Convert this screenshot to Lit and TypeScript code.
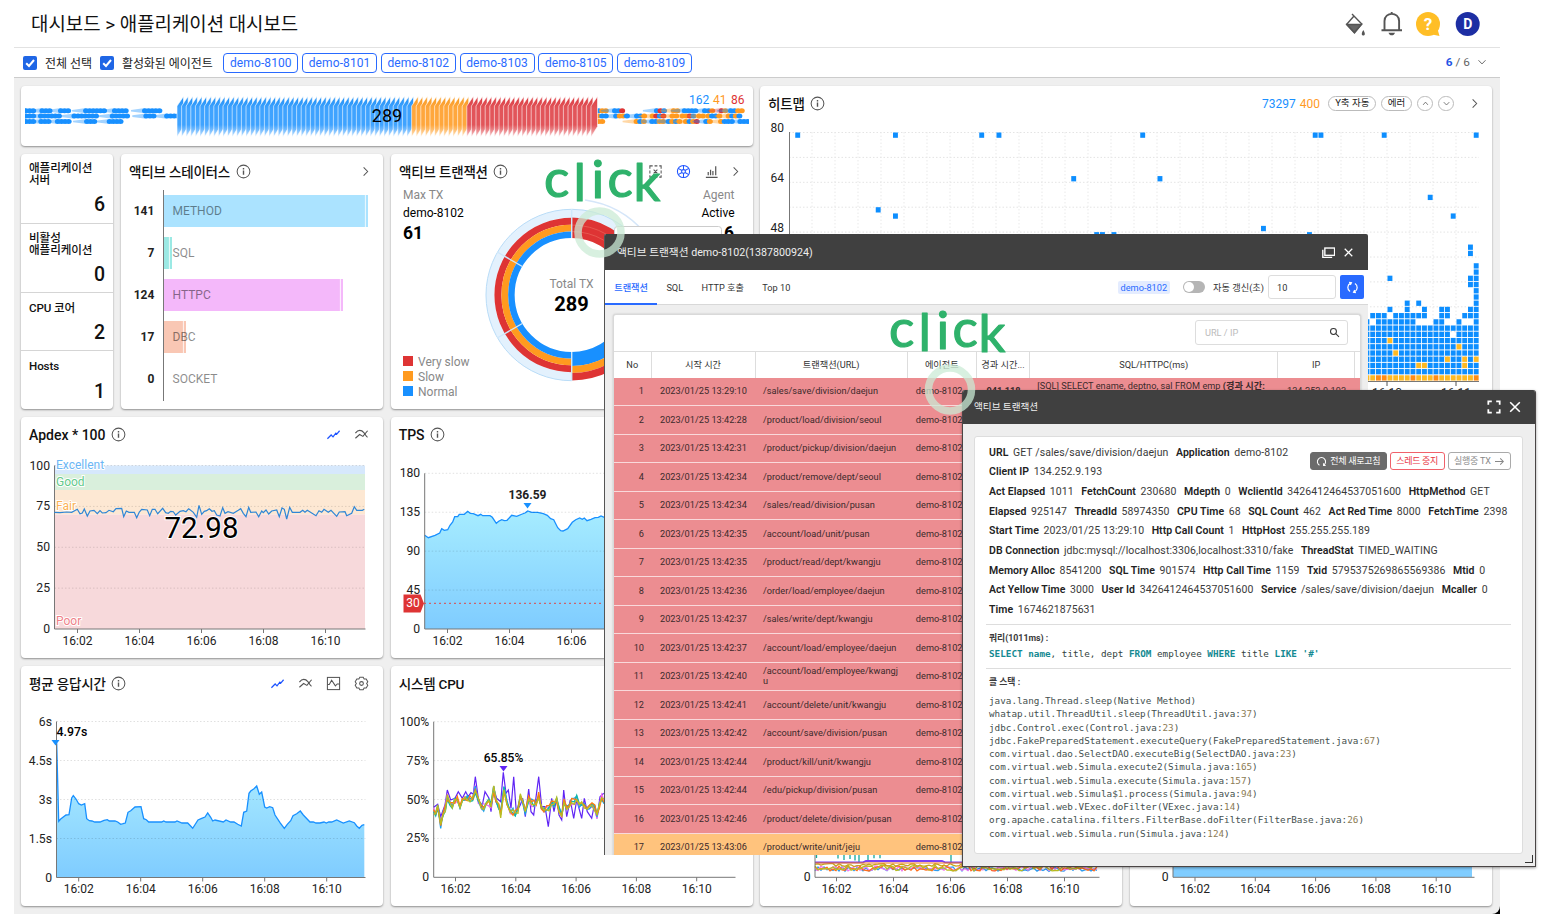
import { LitElement, html, svg, css, nothing } from "lit";
import { customElement, property } from "lit/decorators.js";

const BLUE = "#1890ff";
const ORANGE = "#ff9a1f";
const RED = "#de3434";

/** Parses "x,y x,y" samples stored in thirds of a pixel and moves them to an origin. */
const parse = (s: string, ox: number, oy: number): [number, number][] =>
  s.trim().split(/\s+/).map((p) => {
    const [x, y] = p.split(",").map(Number);
    return [x / 3 + ox, y / 3 + oy];
  });
const join = (p: [number, number][]) => p.map(([x, y]) => x.toFixed(1) + "," + y.toFixed(1)).join(" ");

const seeded = (seed: number) => () => {
  seed = (seed * 16807) % 2147483647;
  return seed / 2147483647;
};

const APDEX = `163,307 180,308 200,306 215,307 232,298 240,311 247,309 253,297 262,318 270,303 282,301 292,311 300,302 307,309 318,308 327,301 340,305 348,296 365,295 371,320 379,303 387,307 403,307 410,323 418,306 425,298 442,300 449,317 457,298 465,298 473,311 488,295 497,308 505,310 512,304 520,305 527,315 540,304 550,302 558,305 566,296 580,307 590,322 597,286 605,313 613,304 620,302 628,296 636,304 643,302 650,315 660,318 668,293 675,310 684,305 700,310 715,301 722,296 730,310 738,320 746,292 752,307 768,306 776,320 785,303 790,308 798,300 806,312 815,303 830,300 838,320 846,294 853,298 860,327 869,292 877,307 900,307 908,301 915,307 922,301 948,317 957,302 965,307 972,298 985,307 993,301 1010,319 1018,306 1035,305 1040,317 1055,310 1063,290 1070,301 1087,301 1093,298`;
const RESP = `170,250 176,484 182,477 198,465 207,464 215,414 220,407 228,417 236,431 244,435 254,431 260,476 268,482 276,483 284,486 300,486 312,481 322,479 328,483 345,483 353,486 362,493 369,491 376,489 384,457 392,452 405,441 423,440 431,476 439,479 446,486 485,486 491,483 498,486 525,486 531,483 546,489 563,489 578,505 594,480 605,475 615,471 623,459 632,472 638,483 645,480 670,486 678,480 692,486 702,486 713,493 724,498 731,457 740,453 747,400 752,393 762,386 770,378 778,403 785,396 794,441 800,444 809,440 818,443 825,465 840,488 853,505 862,493 872,482 879,467 890,461 901,453 910,465 930,486 940,486 948,489 960,489 972,486 979,489 986,486 995,486 1010,480 1030,489 1048,483 1063,488 1070,498 1078,505 1086,496 1093,494`;
const TPS = `119,361 130,368 150,361 164,354 170,341 178,346 188,344 195,331 203,321 209,305 218,305 223,298 238,298 248,289 256,295 265,296 279,302 287,298 293,302 315,302 322,307 334,325 341,319 350,314 358,317 366,316 380,301 395,304 412,297 420,294 428,288 440,292 458,292 475,296 487,301 497,311 506,314 518,338 527,347 534,348 548,341 562,322 572,314 584,309 592,313 598,309 606,317 618,313 630,308 640,307 648,303 658,307 700,312 760,300 850,318 930,306 1000,320 1058,304`;
const CPU_PEAK = `146,427 158,418 167,455 180,420 187,375 197,405 210,400 220,380 232,400 242,380 250,395 258,383 265,388 271,335 280,400 290,430 300,380 312,400 318,440 326,370 335,400 347,410 355,322 363,385 370,375 378,430 386,335 394,440 406,420 413,400 421,455 431,372 438,440 446,450 461,335 470,425 480,425 490,485 500,400 507,440 515,400 522,450 530,465 536,375 545,455 556,405 566,460 575,405 582,430 590,460 598,400 607,440 620,460 628,420 636,460 645,395 656,385`;
const CPU_BASE = `146,440 152,447 158,420 167,480 175,440 181,432 187,396 195,415 202,420 209,411 217,398 225,421 232,413 240,403 247,402 255,402 263,404 271,372 280,405 288,424 296,426 303,420 311,412 318,425 326,370 333,408 341,420 347,450 357,375 366,414 376,445 384,440 391,447 399,436 406,393 414,410 421,440 431,400 440,414 447,416 454,412 461,392 469,420 477,434 485,430 492,432 500,420 507,421 515,405 522,436 530,450 537,412 545,430 553,424 560,412 568,410 575,403 583,425 590,414 598,423 606,424 613,430 621,424 629,430 636,450 643,420 650,392 657,406`;

const icons = {
  info: svg`<circle cx="8" cy="8" r="6.8"/><path d="M8 7v4.4M8 4.3v1.5" stroke-width="1.5"/>`,
  chevron: svg`<path d="M6 3.5 10.3 8 6 12.5"/>`,
  down: svg`<path d="M4 6l4 4.2L12 6"/>`,
  up: svg`<path d="M4.5 10 8 6l3.5 4"/>`,
  line: svg`<path d="M1.500 12.500 5.500 8.500 7.500 10.500 10.500 6.500 11.500 7.500 14.500 4" stroke-width="1.300"/>`,
  multi: svg`<path d="M1.500 12 6 8l3.500 2L14.500 4M1.500 6.500C4.500 2.500 8 3 10.500 6S13 10.500 14.500 11" stroke-width="1.200"/>`,
  box: svg`<rect x="1.500" y="1.500" width="13" height="13"/><path d="M1.500 9h2L6 4.500 10 10.500 12 8.500h2.500"/>`,
  gear: svg`<path d="M6.200 1.300h3.600l1 1.900 2.200 0 1.700 3-1.200 1.800 1.200 1.800-1.700 3-2.200 0-1 1.900H6.200l-1-1.900-2.200 0-1.700-3L2.500 8 1.300 6.200l1.700-3 2.200 0z"/><circle cx="8" cy="8" r="2"/>`,
  pop: svg`<path d="M2 5V2h3M7 2h3M12 2h2v3M2 7v3M14 7v3M2 12v2h3M7 14h3M12 14h2v-2M6 6l4 4M10 6l-4 4"/>`,
  wheel: svg`<circle cx="8" cy="8" r="6.500"/><circle cx="8" cy="8" r="2"/><path d="M8 1.500V6M8 10v4.500M2.400 4.700 6.300 7M9.700 9l3.900 2.300M2.400 11.300 6.300 9M9.700 7l3.900-2.300"/>`,
  bars: svg`<path d="M2 14.300h12.500M4.500 12V8.500M7 12V6M9.500 12V7.500M12.500 12V2.500" stroke-width="1.300"/>`,
  close: svg`<path d="M2.500 2.500l11 11M13.500 2.500l-11 11" stroke-width="1.800"/>`,
  windows: svg`<rect x="3.500" y="2.500" width="12" height="9" stroke-width="1.700"/><path d="M1 4.500V14H12.500" stroke-width="1.700"/>`,
  full: svg`<path d="M1.500 5.500v-4h4M10.500 1.500h4v4M14.500 10.500v4h-4M5.500 14.500h-4v-4" stroke-width="2"/>`,
  search: svg`<circle cx="6.500" cy="6.500" r="4.300" stroke-width="1.500"/><path d="M9.800 9.800l4.700 4.700" stroke-width="1.500"/>`,
  sync: svg`<path d="M5 13A6 6 0 0 1 5.500 2.600M11 3a6 6 0 0 1-.5 10.400M3.800 1.600 6.700 2.200 5.300 4.800M12.200 14.400 9.300 13.800l1.400-2.600" stroke-width="1.500"/>`,
  reload: svg`<path d="M5 13.500A6 6 0 1 1 11 13.500M11 10.500v3.200h3" stroke-width="1.500"/>`,
  arrow: svg`<path d="M1.500 8h12M9 3.500 13.500 8 9 12.500" stroke-width="1.500"/>`,
};

@customElement("ui-icon")
export class UiIcon extends LitElement {
  @property() name: keyof typeof icons = "info";
  static styles = css`
    :host { display: inline-flex; width: 15px; height: 15px; flex: none; }
    svg { width: 100%; height: 100%; fill: none; stroke: currentColor; stroke-width: 1.1; }
  `;
  render() {
    return html`<svg viewBox="0 0 16 16">${icons[this.name]}</svg>`;
  }
}

const TX_ROWS: [string, string][] = [
  ["13:29:10", "/sales/save/division/daejun"],
  ["13:42:28", "/product/load/division/seoul"],
  ["13:42:31", "/product/pickup/division/daejun"],
  ["13:42:34", "/product/remove/dept/seoul"],
  ["13:42:34", "/sales/read/division/pusan"],
  ["13:42:35", "/account/load/unit/pusan"],
  ["13:42:35", "/product/read/dept/kwangju"],
  ["13:42:36", "/order/load/employee/daejun"],
  ["13:42:37", "/sales/write/dept/kwangju"],
  ["13:42:37", "/account/load/employee/daejun"],
  ["13:42:40", "/account/load/employee/kwangju"],
  ["13:42:41", "/account/delete/unit/kwangju"],
  ["13:42:42", "/account/save/division/pusan"],
  ["13:42:44", "/product/kill/unit/kwangju"],
  ["13:42:44", "/edu/pickup/division/pusan"],
  ["13:42:46", "/product/delete/division/pusan"],
  ["13:43:06", "/product/write/unit/jeju"],
];

@customElement("tx-window")
export class TxWindow extends LitElement {
  static styles = css`
    :host {
      display: flex; flex-direction: column; overflow: hidden; box-sizing: border-box;
      border-left: 1px solid #555; background: #eee; color: #333; font-size: 9.2px;
      border-radius: 2px 2px 0 0;
    }
    .title { display: flex; align-items: center; height: 36px; background: #404040; color: #eee; font-size: 10.7px; padding: 0 12px; flex: none; }
    .title span { flex: 1; padding-bottom: 2px; }
    .title ui-icon { width: 13px; height: 13px; margin-left: 7px; color: #fff; }
    .title ui-icon.small { width: 11px; height: 11px; margin: 0 2px 0 8px; }
    .tabs { display: flex; align-items: center; height: 35px; background: #fff; border-bottom: 1px solid #d8d8d8; flex: none; padding-right: 4px; box-sizing: border-box; }
    .tab { padding: 0 9.2px; line-height: 35px; }
    .tab.on { color: #296aff; box-shadow: inset 0 -2px #296aff; font-weight: 500; }
    .grow { flex: 1; }
    .chip { background: #e4ecff; color: #296aff; border-radius: 2px; padding: 0 3px; line-height: 13px; margin-right: 13px; }
    .switch { width: 22px; height: 12px; border-radius: 6px; background: #b5b5b5; margin-right: 8px; padding: 1px; box-sizing: border-box; }
    .switch i { display: block; width: 10px; height: 10px; border-radius: 50%; background: #fff; }
    .num { width: 68px; height: 24px; line-height: 23px; border: 1px solid #ddd; border-radius: 3px; box-sizing: border-box; padding-left: 8px; margin: 0 4px; }
    .go { width: 24px; height: 24px; border-radius: 2px; background: #296aff; color: #fff; display: grid; place-items: center; }
    .go ui-icon { width: 13px; height: 13px; }
    .panel { margin: 9px 7px 0 8px; flex: 1; background: #fff; border: 1px solid #d9d9d9; border-radius: 3px; border-bottom: 0; box-sizing: border-box; box-shadow: 0 0 2px #bbb; }
    .tools { height: 36px; display: flex; justify-content: flex-end; padding: 5px 12px 0 0; box-sizing: border-box; }
    .search { width: 153px; height: 25px; border: 1px solid #ddd; border-radius: 3px; box-sizing: border-box; display: flex; align-items: center; justify-content: space-between; padding: 0 7px 0 9px; color: #bbb; }
    .search ui-icon { width: 11px; height: 11px; color: #333; }
    .row { display: grid; grid-template-columns: 37.5px 104px 152.3px 69px 53.5px 248px 76.5px 1fr; }
    .head { height: 26.5px; border-top: 1px solid #ddd; box-sizing: border-box; }
    .head > div { border-right: 1px solid #ddd; text-align: center; line-height: 25px; white-space: nowrap; overflow: hidden; }
    .head > div:last-child { border: 0; }
    .data { height: 28.5px; background: #ec8d91; border-bottom: 1.5px solid #f9d9db; box-sizing: border-box; align-items: center; color: #3b2a2b; letter-spacing: .02px; }
    .data > div { line-height: 10px; }
    .data.slow { background: #ffc37d; }
    .n { text-align: right; padding-right: 7.5px; }
    .time { text-align: center; }
    .url { padding: 0 5px 0 7.5px; overflow-wrap: anywhere; }
    .agent { padding-left: 8px; white-space: nowrap; }
    .el { font-weight: 700; text-align: center; }
    .ip { text-align: center; }
    .sql { padding-left: 7px; white-space: nowrap; }
  `;
  render() {
    return html`
      <div class="title"><span>액티브 트랜잭션 demo-8102(1387800924)</span><ui-icon name="windows"></ui-icon><ui-icon class="small" name="close"></ui-icon></div>
      <div class="tabs">
        <div class="tab on">트랜잭션</div><div class="tab">SQL</div><div class="tab">HTTP 호출</div><div class="tab">Top 10</div>
        <div class="grow"></div>
        <div class="chip">demo-8102</div><div class="switch"><i></i></div><span>자동 갱신(초)</span>
        <div class="num">10</div><div class="go"><ui-icon name="sync"></ui-icon></div>
      </div>
      <div class="panel">
        <div class="tools"><div class="search"><span>URL / IP</span><ui-icon name="search"></ui-icon></div></div>
        <div class="row head">
          <div>No</div><div>시작 시간</div><div>트랜잭션(URL)</div><div>에이전트</div><div>경과 시간...</div><div>SQL/HTTPC(ms)</div><div>IP</div><div></div>
        </div>
        ${TX_ROWS.map(([time, url], i) => html`
          <div class="row data ${i === 16 ? "slow" : ""}">
            <div class="n">${i + 1}</div><div class="time">2023/01/25 ${time}</div><div class="url">${url}</div><div class="agent">demo-8102</div>
            ${i === 0 ? html`<div class="el">941,118</div><div class="sql">[SQL] SELECT ename, deptno, sal FROM emp <b>(경과 시간:</b><br /><b>1011)</b></div><div class="ip">134.252.9.193</div>` : nothing}
          </div>`)}
      </div>`;
  }
}

const DETAIL: [string, string][][] = [
  [["URL", "GET /sales/save/division/daejun"], ["Application", "demo-8102"]],
  [["Client IP", "134.252.9.193"]],
  [["Act Elapsed", "1011"], ["FetchCount", "230680"], ["Mdepth", "0"], ["WclientId", "3426412464537051600"], ["HttpMethod", "GET"]],
  [["Elapsed", "925147"], ["ThreadId", "58974350"], ["CPU Time", "68"], ["SQL Count", "462"], ["Act Red Time", "8000"], ["FetchTime", "2398"]],
  [["Start Time", "2023/01/25 13:29:10"], ["Http Call Count", "1"], ["HttpHost", "255.255.255.189"]],
  [["DB Connection", "jdbc:mysql://localhost:3306,localhost:3310/fake"], ["ThreadStat", "TIMED_WAITING"]],
  [["Memory Alloc", "8541200"], ["SQL Time", "901574"], ["Http Call Time", "1159"], ["Txid", "5795375269865569386"], ["Mtid", "0"]],
  [["Act Yellow Time", "3000"], ["User Id", "3426412464537051600"], ["Service", "/sales/save/division/daejun"], ["Mcaller", "0"]],
  [["Time", "1674621875631"]],
];
const STACK: string[][] = [
  ["java.lang.Thread.sleep(Native Method)"],
  ["whatap.util.ThreadUtil.sleep(ThreadUtil.java:", "37", ")"],
  ["jdbc.Control.exec(Control.java:", "23", ")"],
  ["jdbc.FakePreparedStatement.executeQuery(FakePreparedStatement.java:", "67", ")"],
  ["com.virtual.dao.SelectDAO.executeBig(SelectDAO.java:", "23", ")"],
  ["com.virtual.web.Simula.execute2(Simula.java:", "165", ")"],
  ["com.virtual.web.Simula.execute(Simula.java:", "157", ")"],
  ["com.virtual.web.Simula$", "1", ".process(Simula.java:", "94", ")"],
  ["com.virtual.web.VExec.doFilter(VExec.java:", "14", ")"],
  ["org.apache.catalina.filters.FilterBase.doFilter(FilterBase.java:", "26", ")"],
  ["com.virtual.web.Simula.run(Simula.java:", "124", ")"],
];

@customElement("detail-window")
export class DetailWindow extends LitElement {
  static styles = css`
    :host { display: flex; flex-direction: column; box-sizing: border-box; border: 1px solid #4a4545; border-top: 0; background: #eee; color: #3a3a3a; border-radius: 3px 3px 0 0; box-shadow: 0 1px 3px #0006; overflow: hidden; }
    .title { height: 34.5px; flex: none; background: #404040; color: #eee; display: flex; align-items: center; padding: 0 13px 0 11px; font-size: 9.6px; }
    .title span { flex: 1; padding-bottom: 2px; }
    .title ui-icon { width: 14px; height: 14px; color: #fff; margin-left: 7px; }
    .panel { position: relative; flex: 1; margin: 11.5px 12px 12px 11px; background: #fff; border: 1px solid #ddd; border-radius: 3px; padding: 6px 11px 0 11px; font-size: 10.5px; }
    .line { display: flex; height: 19.7px; line-height: 19.7px; white-space: nowrap; padding-left: 3px; letter-spacing: .09px; }
    .line span { margin-right: 7.5px; }
    b { color: #222; font-weight: 700; letter-spacing: 0; }
    .line b { margin-right: 4.6px; font-weight: 600; letter-spacing: .04px; }
    .actions { position: absolute; right: 11px; top: 15.5px; display: flex; gap: 3px; font-size: 9px; }
    .btn { height: 18px; line-height: 15px; border: 1px solid #aaa; border-radius: 3px; box-sizing: border-box; color: #888; display: flex; align-items: center; padding: 0 5.5px; gap: 3px; background: #fff; letter-spacing: -.28px; }
    .btn.dark { background: #6b6b6b; border-color: #6b6b6b; color: #fff; }
    .btn.stop { border-color: #f0616a; color: #e8323e; padding: 0 5.5px; }
    .btn ui-icon { width: 11px; height: 11px; }
    hr { border: 0; border-top: 1.5px solid #ddd; margin: 4.5px 0 0 0; }
    .cap { font-size: 8.8px; font-weight: 700; padding: 6px 0 0 3px; line-height: 15px; }
    .code { font-family: "DejaVu Sans Mono", monospace; font-size: 9.3px; line-height: 13.25px; padding-left: 3px; white-space: pre; color: #44504f; }
    .code b { color: #148a92; }
    .code i { font-style: normal; color: #8c7c55; }
    .query { line-height: 15px; color: #333f40; }
    .query + hr { margin-top: 6.5px; }
    .stack { padding-top: 4.5px; }
    .grip { position: absolute; right: -10.5px; bottom: -10.5px; width: 7px; height: 7px; border: solid #333; border-width: 0 1.5px 1.5px 0; }
  `;
  render() {
    return html`
      <div class="title"><span>액티브 트랜잭션</span><ui-icon name="full"></ui-icon><ui-icon name="close"></ui-icon></div>
      <div class="panel">
        <div class="actions">
          <div class="btn dark"><ui-icon name="reload"></ui-icon>전체 새로고침</div>
          <div class="btn stop">스레드 중지</div>
          <div class="btn">실행중 TX <ui-icon name="arrow"></ui-icon></div>
        </div>
        ${DETAIL.map((l) => html`<div class="line">${l.map(([k, v]) => html`<b>${k}</b><span>${v}</span>`)}</div>`)}
        <hr />
        <div class="cap">쿼리(1011ms) :</div>
        <div class="code query"><b>SELECT</b> <b>name</b>, title, dept <b>FROM</b> employee <b>WHERE</b> title <b>LIKE</b> <b>'#'</b></div>
        <hr />
        <div class="cap">콜 스택 :</div>
        <div class="code stack">${STACK.map((l) => html`<div>${l.map((p) => (/^\d+$/.test(p) ? html`<i>${p}</i>` : p))}</div>`)}</div>
        <div class="grip"></div>
      </div>`;
  }
}

@customElement("app-root")
export class AppRoot extends LitElement {
  static styles = css`
    :host { display: block; position: relative; width: 1560px; height: 914px; overflow: hidden; background: #fff; color: #111; font-family: Roboto, "Noto Sans CJK KR", sans-serif; font-size: 12px; }
    .shell { width: 1486px; margin-left: 14px; height: 914px; display: flex; flex-direction: column; }
    .top { height: 48px; box-sizing: border-box; border-bottom: 1px solid #e2e2e2; display: flex; align-items: center; padding: 0 20px 0 17px; }
    h1 { flex: 1; margin: 0; font-weight: 400; font-size: 18.9px; padding-bottom: 3px; }
    .tools { width: 136px; height: 30px; }
    .agents { height: 30px; box-sizing: border-box; border-bottom: 1px solid #ccc; display: flex; align-items: center; padding: 0 11px 0 9px; color: #222; }
    .check { width: 14px; height: 14px; border-radius: 2px; background: #1f66e5; flex: none; margin-right: 8px; }
    .check svg { display: block; fill: none; stroke: #fff; stroke-width: 2; }
    .agents .lab { margin-right: 8px; letter-spacing: -.05px; white-space: nowrap; padding-bottom: 1px; }
    .agents .lab + .tag { margin-left: 2.6px; }
    .tag { border: 1px solid #296aff; color: #296aff; border-radius: 4px; box-sizing: border-box; width: 75px; height: 20px; line-height: 18px; text-align: center; margin-right: 3.75px; letter-spacing: .1px; }
    .count { flex: 1; display: flex; justify-content: flex-end; align-items: center; color: #666; font-size: 11.8px; gap: 3px; padding-bottom: 1px; }
    .count b { color: #1f55e5; }
    .count ui-icon { width: 14px; height: 14px; margin-left: 2px; }
    .board-back { flex: 1; background: #000; }
    .board { height: 836px; box-sizing: border-box; background: #efefef; padding: 8px 8px 0 7px; display: flex; flex-direction: column; gap: 8px; border-bottom-right-radius: 8px; }
    .band { display: flex; gap: 7px; }
    .left { width: 732px; display: flex; flex-direction: column; gap: 8px; }
    .trio { display: grid; grid-template-columns: 92px 262px 362px; gap: 8px; height: 255px; }
    .quad { display: flex; justify-content: space-between; height: 241px; }
    .quad + .quad { height: 240px; }
    .card { background: #fff; border-radius: 4px; box-shadow: 0 1px 2px #0006; display: flex; flex-direction: column; overflow: hidden; }
    .quad .card { width: 362px; }
    .flow { height: 60px; }
    .heat { width: 732px; height: 323px; }
    .head { height: 35px; flex: none; display: flex; align-items: center; gap: 6px; padding: 0 14.5px 0 8px; font-size: 14px; font-weight: 500; color: #111; white-space: nowrap; box-sizing: border-box; }
    .head .ko { font-size: 13.5px; letter-spacing: -.18px; padding-bottom: 2px; }
    .head > span:first-child { margin-right: -.5px; }
    .head ui-icon { color: #555; }
    .head .sp { flex: 1; }
    .head .icons { display: flex; gap: 12.8px; align-items: center; }
    .head .on { color: #1f55ff; }
    .head [name="chevron"] { margin: 0 -4px; }
    .pills { display: flex; align-items: center; gap: 5px; font-weight: 400; font-size: 9.5px; color: #222; margin-right: 10.5px; }
    .pills .big { font-size: 12px; margin-right: -1px; }
    .pills .amber { margin-right: 3.5px; }
    .pill { border: 1px solid #bbb; border-radius: 8px; height: 15px; line-height: 12.5px; padding: 0 5.7px; box-sizing: border-box; }
    .pill.round { width: 16px; padding: 0; display: grid; place-items: center; }
    .pill.round ui-icon { width: 11px; height: 11px; }
    .blue { color: #1890ff; } .amber { color: #ff9a1f; }
    svg.fig { display: block; flex: 1; min-height: 0; width: 100%; }
    svg text { font-family: Roboto, "Noto Sans CJK KR", sans-serif; }
    .stats div { box-sizing: border-box; border-bottom: 1px solid #d5d5d5; padding: 8px 8px 0; font-weight: 500; line-height: 12px; font-size: 11.6px; display: flex; flex-direction: column; justify-content: space-between; letter-spacing: -.1px; }
    .stats div:last-child { border: 0; }
    .stats strong { align-self: flex-end; font-weight: 500; font-size: 19.5px; line-height: 20px; margin-bottom: 7.5px; }
    .stats .tall { height: 70px; } .stats .short { height: 58px; padding-top: 8.5px; }
    .w1 { position: absolute; left: 604px; top: 234px; width: 764px; height: 621px; }
    .w2 { position: absolute; left: 962px; top: 389.5px; width: 574px; height: 477px; }
    .notes { position: absolute; inset: 0; width: 1560px; height: 914px; pointer-events: none; }
    .notes text { font-family: Lato, sans-serif; }
  `;

  private txt(x: number, y: number, s: string, o: { a?: string; w?: number; f?: string; z?: number; halo?: boolean } = {}) {
    return svg`<text x=${x} y=${y} text-anchor=${o.a ?? "start"} font-weight=${o.w ?? 400} fill=${o.f ?? "#222"} font-size=${o.z ?? 12}
      stroke=${o.halo ? "#fff" : "none"} stroke-width=${o.halo ? 2 : 0} paint-order="stroke">${s}</text>`;
  }

  private axes(x0: number, x1: number, y0: number, y1: number, labels: string[], t0: number, step: number, ticks = 5) {
    const n = labels.length - 1;
    return svg`
      ${labels.map((l, i) => {
        const y = y0 + ((y1 - y0) * i) / n;
        return svg`${i < n ? svg`<path d="M${x0} ${y}H${x1}" stroke="#000" stroke-opacity=".12" stroke-dasharray="1.5 2"/>` : nothing}${this.txt(x0 - 4.5, y + 4, l, { a: "end", z: 12.2 })}`;
      })}
      <path d="M${x0} ${y0}V${y1}H${x1}" fill="none" stroke="#777" stroke-width="1"/>
      ${["16:02", "16:04", "16:06", "16:08", "16:10"].slice(0, ticks).map((l, i) => svg`<path d="M${t0 + i * step} ${y1}v4" stroke="#777"/>${this.txt(t0 + i * step, y1 + 15.5, l, { a: "middle" })}`)}`;
  }

  private area(pts: [number, number][], base: number, grad: string) {
    return svg`<path d="M${pts[0][0]} ${base}L${join(pts)}L${pts[pts.length - 1][0]} ${base}Z" fill="url(#${grad})"/><polyline points=${join(pts)} fill="none" stroke="#1890ff" stroke-width="1.3"/>`;
  }

  private grad(id: string, a: string, b: string) {
    return svg`<linearGradient id=${id} x1="0" x2="0" y1="0" y2="1"><stop offset="0" stop-color=${a}/><stop offset="1" stop-color=${b}/></linearGradient>`;
  }

  private head(title: string, ko: boolean, info: boolean, names: (keyof typeof icons)[]) {
    return html`<div class="head"><span class=${ko ? "ko" : ""}>${title}</span>${info ? html`<ui-icon></ui-icon>` : nothing}<div class="sp"></div>
      <div class="icons">${names.map((n) => html`<ui-icon class=${n === "line" || n === "wheel" ? "on" : ""} name=${n}></ui-icon>`)}</div></div>`;
  }

  private renderFlow() {
    const slats = [];
    for (let x = 177; x <= 592; x += 4.6) {
      const f = x < 410 ? "fb" : x < 466 ? "fo" : "fr";
      slats.push(svg`<path d="M${x} 106L${x + 6.5} 96.500V126.500L${x} 137z" fill="url(#${f})" stroke="#fff" stroke-opacity=".75" stroke-width=".8"/>`);
    }
    const r = seeded(77);
    const dots = [];
    const streak = (x: number, y: number, n: number, pick: () => string) => {
      const first = pick();
      dots.push(svg`<path d="M${x} ${y - 2.6}l-14 1.800v1.600l14 1.800z" fill=${first} opacity=".4"/>`);
      for (let i = 0; i < n; i++) dots.push(svg`<ellipse cx=${x + i * 3.6} cy=${y} rx="3" ry="2.500" fill=${i ? pick() : first}/>`);
    };
    for (let row = 0; row < 3; row++) {
      const y = 110.7 + row * 5.4;
      for (let x = 26; x < 178; ) {
        const n = 3 + Math.floor(r() * 5);
        if (!(row === 2 && x > 112 && x < 172)) streak(x, y, n, () => BLUE);
        x += n * 3.6 + 4 + r() * 12;
      }
      for (let x = 595; x < 742; ) {
        const n = 2 + Math.floor(r() * 3);
        if (!((row === 0 && x > 628 && x < 650) || (row === 2 && x > 606 && x < 636)))
          streak(x, y, n, () => { const k = r(); return k < 0.5 ? BLUE : k < 0.87 ? ORANGE : RED; });
        x += n * 3.6 + 2 + r() * 6;
      }
    }
    const g = (id: string, a: string, b: string, c: string) => svg`<linearGradient id=${id} x1="0" x2="0" y1="0" y2="1"><stop offset="0" stop-color=${a}/><stop offset=".3" stop-color=${b}/><stop offset=".7" stop-color=${b}/><stop offset="1" stop-color=${c}/></linearGradient>`;
    return html`<div class="card flow"><svg class="fig" viewBox="21 86 732 60">
      <defs>${g("fb", "#1e8ff5", "#3fa3ff", "#c2e1ff")}${g("fo", "#f79a22", "#ffa73d", "#ffe2bd")}${g("fr", "#dc3a40", "#e2555a", "#f6c5c7")}</defs>
      <svg x="25" y="86" width="724" height="60" viewBox="25 86 724 60">${dots}</svg>
      ${slats}
      ${this.txt(387, 122, "289", { a: "middle", z: 18, w: 400, f: "#000" })}
      ${this.txt(689, 104, "162", { f: BLUE, z: 12 })}${this.txt(713, 104, "41", { f: ORANGE, z: 12 })}${this.txt(731, 104, "86", { f: RED, z: 12 })}
    </svg></div>`;
  }

  private renderStates() {
    const rows: [string, number, number, string][] = [
      ["METHOD", 141, 368, "#abe3ff"], ["SQL", 7, 172, "#9be9e4"], ["HTTPC", 124, 343, "#f4b8fa"], ["DBC", 17, 186, "#f9c7b4"], ["SOCKET", 0, 163, "none"],
    ];
    return html`<div class="card">${this.head("액티브 스테이터스", true, true, ["chevron"])}<svg class="fig" viewBox="121 189 262 220">
      ${rows.map(([n, v, x, c], i) => svg`
        ${v ? svg`<path d="M164 ${195 + i * 42}H${x}v32H164z" fill=${c}/><path d="M${x - 2.6} ${195 + i * 42}v32" stroke="#fff" stroke-opacity=".8"/>` : nothing}
        <g opacity=".45">${this.txt(172.5, 215 + i * 42, n, { f: "#000", z: 12 })}</g>`)}
      ${rows.map(([, v], i) => this.txt(154.3, 215 + i * 42, String(v), { a: "end", w: 700, z: 12 }))}
      <path d="M163.500 190V401" stroke="#777"/></svg></div>`;
  }

  private arc(r: number, w: number, a0: number, a1: number, c: string) {
    const p = (a: number) => {
      const t = ((a - 90) * Math.PI) / 180;
      return `${571.7 + r * Math.cos(t)} ${295 + r * Math.sin(t)}`;
    };
    return svg`<path d="M${p(a0)}A${r} ${r} 0 ${a1 - a0 > 180 ? 1 : 0} 1 ${p(a1)}" stroke=${c} stroke-width=${w} fill="none"/>`;
  }

  private renderTx() {
    const line = (a: number) => {
      const t = ((a - 90) * Math.PI) / 180;
      return svg`<path d="M${571.7 + 57 * Math.cos(t)} ${295 + 57 * Math.sin(t)}L${571.7 + 86 * Math.cos(t)} ${295 + 86 * Math.sin(t)}" stroke="#cfe8fb" stroke-width="1.4"/>`;
    };
    return html`<div class="card">${this.head("액티브 트랜잭션", true, true, ["pop", "wheel", "bars", "chevron"])}<svg class="fig" viewBox="391 189 362 220">
      ${this.txt(403, 199, "Max TX", { f: "#888" })}${this.txt(403, 217, "demo-8102", { f: "#000" })}${this.txt(403, 239, "61", { w: 700, z: 17.5, f: "#000" })}
      ${this.txt(734.5, 199, "Agent", { f: "#888", a: "end" })}${this.txt(734.5, 217, "Active", { f: "#000", a: "end" })}${this.txt(734, 239, "6", { w: 700, z: 17.5, f: "#000", a: "end" })}
      ${this.arc(81.5, 8.5, 180, 360, "#e3f1fd")}${this.arc(81.5, 8.5, 0, 60, "#e3f1fd")}
      ${this.arc(85.7, 1, 180, 359.9, "#b9dcf7")}${this.arc(85.7, 1, 0, 60, "#b9dcf7")}
      ${this.arc(96, 1.5, 8, 50, "#d5e6f9")}
      ${this.arc(73.8, 7, 180, 359.9, RED)}${this.arc(66.9, 6.8, 180, 359.9, ORANGE)}${this.arc(60.3, 6.5, 180, 359.9, BLUE)}
      ${this.arc(67.2, 20.5, 0, 60, RED)}${this.arc(70, 0.5, 0, 60, "#ef7a6a")}${this.arc(63.5, 0.5, 0, 60, "#ef7a6a")}
      ${this.arc(64, 14, 60, 180, BLUE)}${this.arc(74.5, 7, 60, 180, ORANGE)}${this.arc(81.7, 7.5, 60, 180, RED)}
      ${[0, 60, 120, 180, 240, 300].map(line)}
      ${this.txt(571.5, 288, "Total TX", { a: "middle", f: "#888" })}${this.txt(571.5, 310.5, "289", { a: "middle", w: 700, z: 20, f: "#000" })}
      <rect x="614.500" y="226.500" width="107" height="40" rx="3" fill="#fff" stroke="#ccc"/>
      ${([["Very slow", RED], ["Slow", ORANGE], ["Normal", BLUE]] as const).map(([l, c], i) => svg`<path d="M403 ${356 + i * 15}h10v10h-10z" fill=${c}/>${this.txt(418, 366 + i * 15, l, { f: "#888" })}`)}
    </svg></div>`;
  }

  private renderHeat() {
    const px = 5.75, py = 6.225;
    const cells: [number, number, string][] = [];
    const add = (c: number, r: number, f = "#0d8eff") => cells.push([c, r, f]);
    const at = (x: number, y: number) => add(Math.floor((x - 789) / px), Math.floor((381 - y) / py));
    ([[797, 135], [895, 135], [981, 135], [998, 135], [1142, 135], [1314.5, 135], [1321, 135], [1383, 135], [1476, 135], [1073, 178], [1159.6, 178], [877.6, 209], [895, 216], [1263, 228], [1430, 197], [1453, 216], [1096, 235], [1102, 235], [1113.6, 235], [1309, 235], [1470, 247], [1470, 253], [1470, 278], [1470, 284], [1389.5, 278]] as [number, number][]).forEach(([x, y]) => at(x, y));
    for (let r = 13; r < 19; r++) add(119, r);
    const top: Record<number, number[]> = { 9: [-1, 1, 2, 3, 4, 5, 6, 7, 11, 12, 15, 18], 10: [0, 1, 2, 4, 5, 6, 7, 8, 9, 12, 13, 16, 17, 18], 11: [3, 6, 9, 12, 13, 17, 18], 12: [6, 8, 18] };
    for (const r in top) top[r].forEach((i) => add(101 + i, +r));
    const warm = new Set(["3,6", "4,4", "8,2", "9,2", "13,3", "15,5", "16,3", "16,2", "18,3"]);
    for (let i = -1; i < 19; i++)
      for (let r = 0; r < 9; r++) {
        if (i === 14 && r === 7) continue;
        add(101 + i, r, r === 0 ? ([1, 2, 7, 11, 18].includes(i) ? "#ff8c14" : "#fdb924") : warm.has(i + "," + r) ? "#fdb924" : undefined);
      }
    return html`<div class="card heat">
      <div class="head"><span class="ko">히트맵</span><ui-icon></ui-icon><div class="sp"></div>
        <div class="pills"><span class="blue big">73297</span><span class="amber big">400</span><span class="pill">Y축 자동</span><span class="pill">에러</span><span class="pill round"><ui-icon name="up"></ui-icon></span><span class="pill round"><ui-icon name="down"></ui-icon></span></div>
        <ui-icon name="chevron"></ui-icon></div>
      <svg class="fig" viewBox="760 121 732 288">
        ${Array.from({ length: 10 }, (_, i) => svg`<path d="M789 ${132.5 + i * 24.9}H1479" stroke="#e4e4e4" stroke-dasharray="1.5 2"/>`)}
        ${Array.from({ length: 29 }, (_, i) => svg`<path d="M${812 + i * 23} 132V381" stroke="#e9e9e9" stroke-dasharray="1.5 2"/>`)}
        ${cells.map(([c, r, f]) => svg`<rect x=${789 + c * px + 0.5} y=${381 - (r + 1) * py + 0.5} width="4.900" height="5.300" fill=${f}/>`)}
        <path d="M789.500 132V381.500H1479" fill="none" stroke="#777"/>
        ${this.txt(784, 132.3, "80", { a: "end" })}${this.txt(784, 182.3, "64", { a: "end" })}${this.txt(784, 232, "48", { a: "end" })}
        ${[["16:10", 1387], ["16:11", 1456]].map(([l, x]) => svg`<path d="M${x} 381v5" stroke="#555"/>${this.txt(+x, 397, l as string, { a: "middle" })}`)}
      </svg></div>`;
  }

  private renderApdex() {
    const pts = parse(APDEX, 0, 410);
    return html`<div class="card">${this.head("Apdex * 100", false, true, ["line", "multi"])}<svg class="fig" viewBox="21 452 362 206">
      <path d="M54.500 465.500H365V474H54.500z" fill="#d6e8fc"/><path d="M54.500 474H365V490H54.500z" fill="#d9efdc"/><path d="M54.500 490H365V514.500H54.500z" fill="#fde8d3"/><path d="M54.500 514.500H365V629H54.500z" fill="#f7d9db"/>
      ${this.axes(54.5, 365.5, 465.5, 629, ["100", "75", "50", "25", "0"], 77.5, 62)}
      ${this.txt(56, 469, "Excellent", { f: "#6bb6f5", halo: true, z: 12 })}${this.txt(56, 486, "Good", { f: "#63c98a", halo: true, z: 12 })}${this.txt(56, 510, "Fair", { f: "#fbb154", halo: true, z: 12 })}${this.txt(56, 625, "Poor", { f: "#ef7f88", halo: true, z: 12 })}
      <polyline points=${join(pts)} fill="none" stroke="#2f86d6" stroke-width="1.2"/>
      ${this.txt(201.5, 538, "72.98", { a: "middle", z: 29.5, f: "#000", halo: true })}
    </svg></div>`;
  }

  private renderTps() {
    return html`<div class="card">${this.head("TPS", false, true, [])}<svg class="fig" viewBox="391 452 362 206">
      <defs>${this.grad("tg", "#a6ecff", "#7fccff")}</defs>
      ${this.area(parse(TPS, 385, 415), 629, "tg")}
      ${this.axes(424.7, 735, 473.3, 629, ["180", "135", "90", "45", "0"], 447.5, 62, 3)}
      <path d="M424 603.300H735" stroke="#e04848" stroke-dasharray="2 3"/>
      <path d="M403.500 594.500h17l3.500 9-3.500 9h-17z" fill=${RED}/>${this.txt(413, 607, "30", { a: "middle", f: "#fff" })}
      ${this.txt(527.5, 498.5, "136.59", { a: "middle", w: 700, z: 12 })}<path d="M523.500 503h8l-4 5.500z" fill=${BLUE}/>
    </svg></div>`;
  }

  private renderResp() {
    return html`<div class="card">${this.head("평균 응답시간", true, true, ["line", "multi", "box", "gear"])}<svg class="fig" viewBox="21 701 362 205">
      <defs>${this.grad("rg", "#b4f2ff", "#7fccff")}</defs>
      ${this.area(parse(RESP, 0, 660), 877.5, "rg")}
      ${this.axes(56.5, 365.5, 721.5, 877.5, ["6s", "4.5s", "3s", "1.5s", "0"], 78.7, 62)}
      ${this.txt(56.5, 736, "4.97s", { w: 500, z: 12.3, f: "#000" })}<path d="M51.500 740h8l-4 5.500z" fill=${BLUE}/>
    </svg></div>`;
  }

  private renderCpu() {
    const r = seeded(5);
    const base = parse(CPU_BASE, 385, 665);
    const noisy = (amp: number) => join(base.map(([x, y]) => [x, y + (r() - 0.5) * amp] as [number, number]));
    return html`<div class="card">${this.head("시스템 CPU", true, false, [])}<svg class="fig" viewBox="391 701 362 205">
      ${this.axes(433.7, 735.5, 721.7, 877.3, ["100%", "75%", "50%", "25%", "0"], 455.5, 60.3)}
      <polyline points=${join(parse(CPU_PEAK, 385, 665))} fill="none" stroke="#6025f5" stroke-width="1.2"/>
      ${[["#f36bf0", 8], ["#18a0f0", 8], ["#11b8a8", 8], ["#ff7a0f", 8], ["#b9bd22", 6]].map(([c, a]) => svg`<polyline points=${noisy(a as number)} fill="none" stroke=${c} stroke-width="1.3"/>`)}
      ${this.txt(503.5, 762, "65.85%", { a: "middle", w: 500, z: 12, f: "#000" })}<path d="M499.500 766h8l-4 5.500z" fill="#6025f5"/>
    </svg></div>`;
  }

  private renderMulti() {
    const r = seeded(31);
    const wave = (y: number, amp: number) => {
      const p: [number, number][] = [];
      for (let x = 815; x < 1099; x += 3) p.push([x, y + (r() - 0.5) * amp]);
      return join(p);
    };
    return html`<div class="card"><svg class="fig" viewBox="760 666 362 240">
      ${[816.5, 838, 844, 850, 855, 859, 868, 874, 880, 951].map((x) => svg`<path d="M${x} 840v${18 + r() * 5}" stroke="#14a79b" stroke-width="1.3"/>`)}
      ${[["#2f9cf0", 869, 5], ["#f078f0", 868.5, 5], ["#ff6e1c", 868, 6], ["#b9bd22", 868, 6], ["#c8a41c", 865, 3]].map(([c, y, a]) => svg`<polyline points=${wave(y as number, a as number)} fill="none" stroke=${c} stroke-width="1.3"/>`)}
      <path d="M815 862.300H863L866 861H942L945 862.300H962" fill="none" stroke="#7b3ff2" stroke-width="1.800"/><path d="M815 863H962" stroke="#f0761c" stroke-width="1.200"/>
      ${this.axes(815, 1099.5, 721.7, 877.3, ["", "", "0"], 836.5, 57)}
    </svg></div>`;
  }

  private renderLast() {
    return html`<div class="card"><svg class="fig" viewBox="1130 666 362 240">
      <path d="M1173 780H1472V877H1173z" fill="#80cdff"/>
      ${this.axes(1173, 1474.5, 721.7, 877.3, ["", "", "0"], 1195, 60.3)}
    </svg></div>`;
  }

  private check() {
    return html`<span class="check"><svg viewBox="0 0 14 14"><path d="M3.200 7.200 6 10l5-6"/></svg></span>`;
  }

  render() {
    return html`
      <div class="shell">
        <div class="top"><h1>대시보드 &gt; 애플리케이션 대시보드</h1>
          <svg class="tools" viewBox="1344 9 136 30">
            <g fill="none" stroke="#555" stroke-width="1.400"><path d="M1352 14l9.800 10-7.300 9-8-8.500 7.500-8.500"/><path d="M1347.300 24.500h14l-7 8z" fill="#666"/><path d="M1363.300 30c2.800 4.400 1.100 5.500 0 5.500s-2.800-1.100 0-5.500z" fill="#555" stroke="none"/>
              <path d="M1381.500 30.300h20.500M1384.500 30.500V21c0-9.500 14.600-9.500 14.600 0v9.500M1391.700 14v-2" stroke-width="1.900"/><path d="M1388.500 32.800h6.500c-.8 3.400-5.700 3.400-6.500 0z" fill="#555" stroke="none"/></g>
            <circle cx="1428" cy="24" r="12" fill="#ffbe26"/><path d="M1430 34l9.500 2-2-7z" fill="#ffbe26"/>
            <circle cx="1467.700" cy="24" r="12" fill="#1d2ea3"/>
            ${this.txt(1428, 30, "?", { a: "middle", f: "#fff", w: 700, z: 17 })}${this.txt(1467.7, 29, "D", { a: "middle", f: "#fff", w: 700, z: 14 })}
          </svg></div>
        <div class="agents">${this.check()}<span class="lab">전체 선택</span>${this.check()}<span class="lab">활성화된 에이전트</span>
          ${["8100", "8101", "8102", "8103", "8105", "8109"].map((n) => html`<span class="tag">demo-${n}</span>`)}
          <div class="count"><b>6</b><span>/ 6</span><ui-icon name="down"></ui-icon></div></div>
        <div class="board-back"><div class="board">
          <div class="band">
            <div class="left">${this.renderFlow()}
              <div class="trio">
                <div class="card stats">
                  <div class="tall"><span>애플리케이션<br />서버</span><strong>6</strong></div>
                  <div class="tall"><span>비활성<br />애플리케이션</span><strong>0</strong></div>
                  <div class="short"><span>CPU 코어</span><strong>2</strong></div>
                  <div class="short"><span>Hosts</span><strong>1</strong></div>
                </div>
                ${this.renderStates()}${this.renderTx()}
              </div></div>
            ${this.renderHeat()}
          </div>
          <div class="quad">${this.renderApdex()}${this.renderTps()}<div class="card"></div><div class="card"></div></div>
          <div class="quad">${this.renderResp()}${this.renderCpu()}${this.renderMulti()}${this.renderLast()}</div>
        </div></div>
      </div>
      <tx-window class="w1"></tx-window>
      <detail-window class="w2"></detail-window>
      <svg class="notes" viewBox="0 0 1560 914">
        <circle cx="599.500" cy="232.500" r="21.500" fill="none" stroke="#cbebd5" stroke-opacity=".74" stroke-width="7.500"/>
        <circle cx="950" cy="389.500" r="21.500" fill="none" stroke="#cbebd5" stroke-opacity=".74" stroke-width="7.500"/>
        ${[[0, 0], [345, 150.5]].map(([x, y]) => svg`<text transform="translate(${x} ${y})" x="544 573.500 591.500 607.500 633.500" y="196.500 200.500 198 196.500 201" font-size="53" fill="#2fb26b" stroke="#2fb26b" stroke-width="1.200" stroke-linejoin="round">click</text>`)}
      </svg>`;
  }
}
